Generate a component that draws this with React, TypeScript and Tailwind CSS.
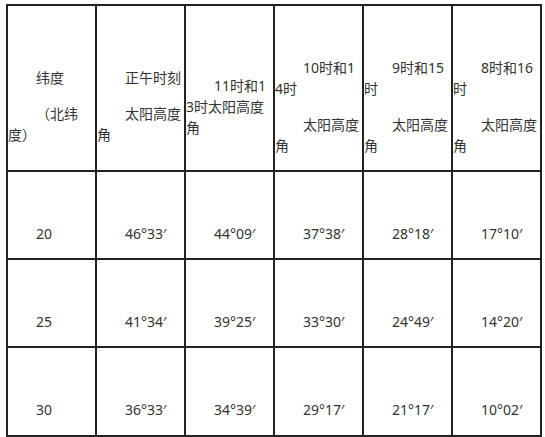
import React from 'react';

const header: string[][] = [
  ['纬度', '（北纬度）'],
  ['正午时刻', '太阳高度角'],
  ['11时和13时太阳高度角'],
  ['10时和14时', '太阳高度角'],
  ['9时和15时', '太阳高度角'],
  ['8时和16时', '太阳高度角'],
];

const rows: string[][] = [
  ['20', '46°33′', '44°09′', '37°38′', '28°18′', '17°10′'],
  ['25', '41°34′', '39°25′', '33°30′', '24°49′', '14°20′'],
  ['30', '36°33′', '34°39′', '29°17′', '21°17′', '10°02′'],
];

function Cell({ lines }: { lines: string[] }) {
  return (
    <div className="flex flex-col justify-center gap-[15px] bg-white pt-[36px]">
      {lines.map((line, index) => (
        <p key={index} className="indent-[28px] break-all leading-[21px]">
          {line}
        </p>
      ))}
    </div>
  );
}

export default function App() {
  return (
    <div className="h-[437px] w-[545px] bg-white pl-[6px] pt-[4px] font-['Noto_Sans','Noto_Sans_CJK_SC',sans-serif] text-[14px] text-[#333]">
      <div className="grid w-[536px] grid-cols-[repeat(6,87px)] grid-rows-[164px_86px_86px_87px] gap-[2px] bg-[#222] p-[2px]">
        {header.map((lines, index) => (
          <Cell key={`h-${index}`} lines={lines} />
        ))}
        {rows.map((row, rowIndex) =>
          row.map((value, colIndex) => <Cell key={`${rowIndex}-${colIndex}`} lines={[value]} />),
        )}
      </div>
    </div>
  );
}
